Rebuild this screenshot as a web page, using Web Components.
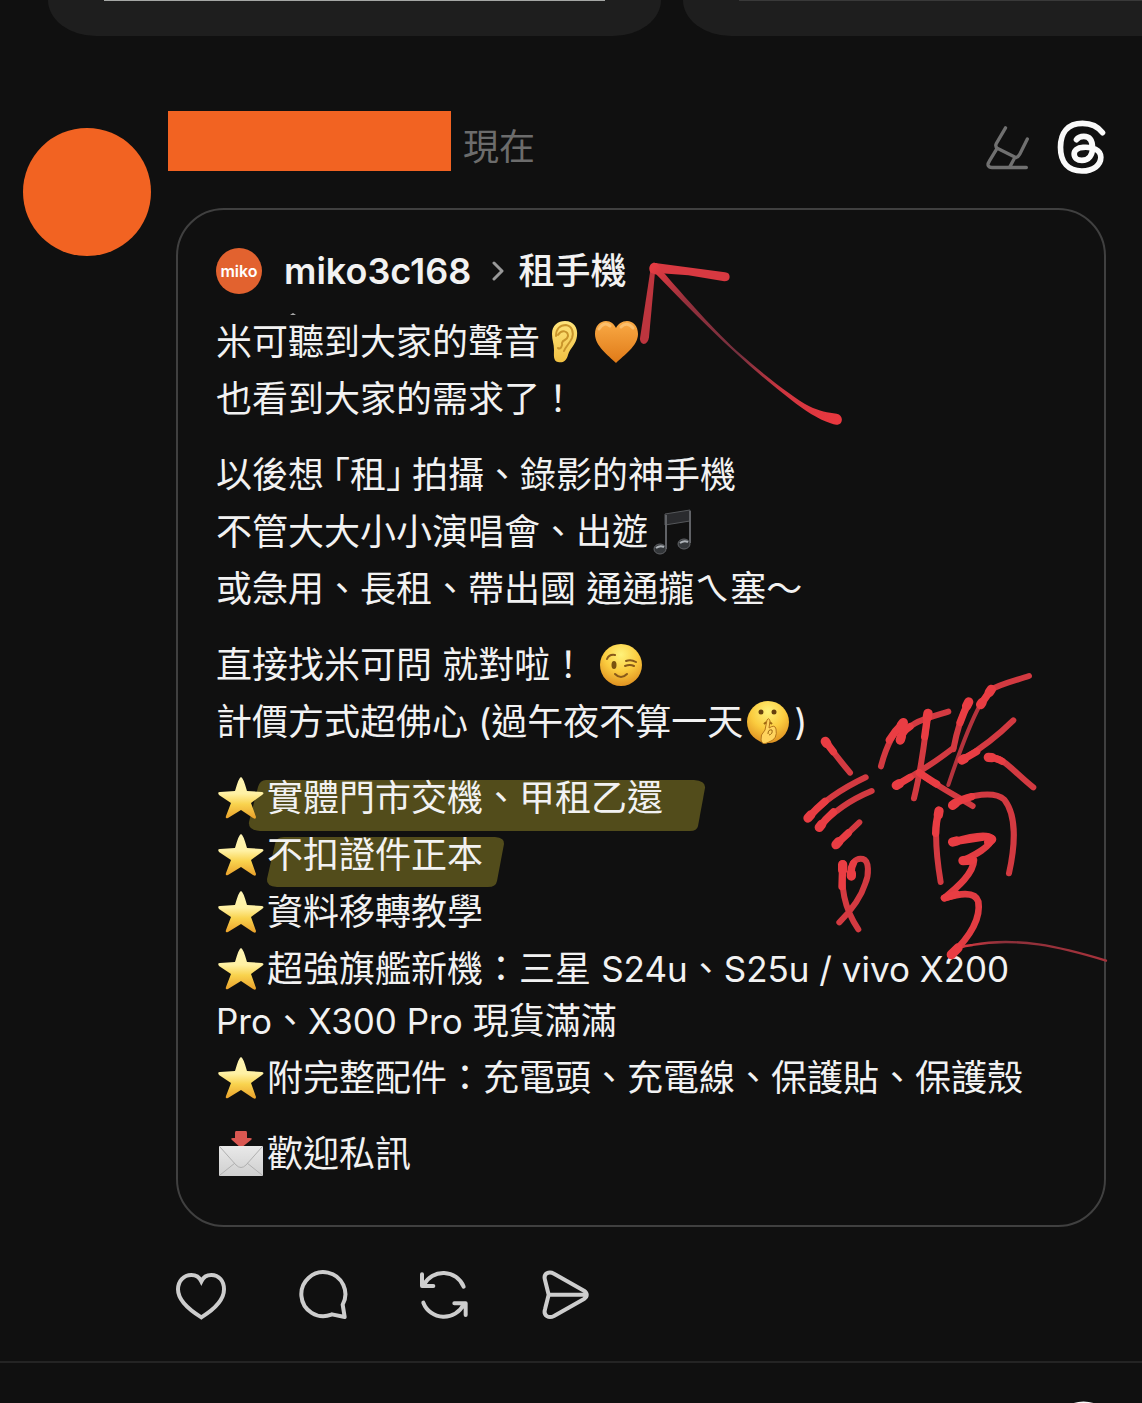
<!DOCTYPE html>
<html lang="zh-Hant">
<head>
<meta charset="utf-8">
<meta name="viewport" content="width=device-width, initial-scale=1">
<title>miko3c168</title>
<style>
html {
    background-color: #101010;
}

body {
    margin: 0;
    height: 100vh;
    overflow: hidden;
    color: #f2f2f2;
    font-family: Inter, "Noto Sans CJK TC", sans-serif;
    font-size: 36px;
    line-height: 52px;
}

p {
    margin: 0;
    display: flex;
    flex-direction: column;
    gap: 5px;
}

.open,
.close {
    font-feature-settings: "halt";
}

.open {
    padding-left: 8px;
}

.close {
    padding-right: 8px;
}

.latin {
    font-size: 35px;
    line-height: 36px;
}
</style>
</head>
<body>
<story-strip></story-strip>
<main>
    <thread-post>
        <span slot="time">現在</span>
        <quoted-post>
            <span slot="logo">miko</span>
            <span slot="name">miko3c168</span>
            <span slot="topic">租手機</span>
            <p>
                <span>米可聽到大家的聲音<emoji-glyph name="ear"></emoji-glyph><emoji-glyph name="heart"></emoji-glyph></span>
                <span>也看到大家的需求了！</span>
            </p>
            <p>
                <span>以後想<span class="open">「</span>租<span class="close">」</span>拍攝、錄影的神手機</span>
                <span>不管大大小小演唱會、出遊<emoji-glyph name="music"></emoji-glyph></span>
                <span>或急用、長租、帶出國 通通攏ㄟ塞～</span>
            </p>
            <p>
                <span>直接找米可問 就對啦！ <emoji-glyph name="wink"></emoji-glyph></span>
                <span>計價方式超佛心 (過午夜不算一天<emoji-glyph name="hush"></emoji-glyph>)</span>
            </p>
            <p>
                <span><emoji-glyph name="star"></emoji-glyph>實體門市交機、甲租乙還</span>
                <span><emoji-glyph name="star"></emoji-glyph>不扣證件正本</span>
                <span><emoji-glyph name="star"></emoji-glyph>資料移轉教學</span>
                <span>
                    <span><emoji-glyph name="star"></emoji-glyph>超強旗艦新機：三星 </span><span class="latin">S24u</span><span>、</span><span class="latin">S25u / vivo X200</span>
                    <br>
                    <span class="latin">Pro</span><span>、</span><span class="latin">X300 Pro</span> <span>現貨滿滿</span>
                </span>
                <span><emoji-glyph name="star"></emoji-glyph>附完整配件：充電頭、充電線、保護貼、保護殼</span>
            </p>
            <p>
                <span><emoji-glyph name="mail"></emoji-glyph>歡迎私訊</span>
            </p>
        </quoted-post>
    </thread-post>
    <next-post></next-post>
</main>

<script>
function define(name, html) {
    const template = document.createElement('template');
    template.innerHTML = html;
    customElements.define(name, class extends HTMLElement {
        constructor() {
            super();
            this.attachShadow({ mode: 'open' }).appendChild(template.content.cloneNode(true));
        }
    });
}

// ---- icons ----
const icons = {
    threads: { box: '290 58 146 162', width: 17, path: '<path d="M426 96C412 77 392 68 366 68C322 68 300 96 300 140C300 186 324 211 364 211C400 211 421 192 421 170C421 147 396 138 368 140C350 141 341 149 341 160C341 172 351 179 364 179C386 179 396 162 396 142C396 119 387 107 370 107C360 107 352 111 348 117"/>' },
    draft: { box: '78 72 130 135', width: 10, path: '<path d="M137 80L109 128Q105 136 112 142L168 170Q176 168 180 160L203 114M111 143L88 181C80 193 85 200 96 200H200M164 172L150 198"/>' },
    heart: { box: '45 60 150 150', width: 12, path: '<path stroke-linejoin="miter" d="M121 94C115 81 105 75 91 75C68 75 51 93 51 118C51 149 80 177 121 202C162 177 189 149 189 118C189 93 174 75 151 75C137 75 127 81 121 94Z"/>' },
    comment: { box: '414 60 150 150', width: 12, path: '<path d="M516 193L554 201L548 164A66 66 0 1 0 514 194Z"/>' },
    repost: { box: '783 60 150 150', width: 12, path: '<path d="M914 110A66 66 0 0 0 794 105M789 73V108H823M793 158A66 66 0 0 0 914 163M920 195V160H886"/>' },
    send: { box: '1149 60 150 150', width: 12, path: '<path d="M1169 134H1280M1158 90C1152 70 1170 63 1185 71L1275 122C1286 129 1286 140 1275 147L1185 198C1170 206 1152 198 1158 178L1169 134Z"/>' }
};

class LineIcon extends HTMLElement {
    constructor() {
        super();
        this.attachShadow({ mode: 'open' });
    }

    connectedCallback() {
        const icon = icons[this.getAttribute('name')];
        this.shadowRoot.innerHTML = `
<style>
:host { display: block; }
svg { display: block; width: 100%; height: 100%; }
</style>
<svg viewBox="${icon.box}" fill="none" stroke="currentColor" stroke-width="${icon.width}" stroke-linecap="round" stroke-linejoin="round" aria-hidden="true">${icon.path}</svg>`;
    }
}
customElements.define('line-icon', LineIcon);

// ---- emoji, drawn on a 51x52 box ----
const face = '<circle cx="25" cy="26" r="21" fill="url(#face)"/>';
const emoji = {
    ear: '<path d="M12 18C12 9 18 5 25 5C34 5 38 12 37 20C36 29 30 32 28 39C26 46 22 47 18 46C13 45 14 39 14 34C14 28 12 24 12 18Z" fill="url(#gold)"/><path d="M16 20C16 13 20 9 26 9C32 10 34 16 32 22C30 27 26 30 24 35M18 19C22 13 28 15 28 20C27 25 23 23 22 27C23 30 20 34 18 32" fill="none" stroke="#c9952c" stroke-width="2" stroke-linecap="round"/>',
    heart: '<path d="M25 47C17 39 4 30 4 18C4 10 9 5 15 5C20 5 23 8 25 12C27 8 31 5 36 5C42 5 47 10 47 18C47 30 33 39 25 47Z" fill="url(#orange)"/><path d="M8 13Q13 5 19 10M30 11Q36 5 42 12" stroke="#ffd08a" stroke-width="3" fill="none" stroke-linecap="round" opacity=".6"/>',
    music: '<path d="M17 8L42 4V15L17 19Z" fill="#2a2b2e" stroke="#55575a"/><path d="M18 9V43M42 5V37" stroke="#606266" stroke-width="2"/><ellipse cx="12" cy="43" rx="6" ry="5" fill="#34373a" stroke="#606266"/><ellipse cx="36" cy="38" rx="6" ry="5" fill="#34373a" stroke="#606266"/><path d="M8 42Q12 39 16 41M32 37Q36 34 40 36" stroke="#aeb3b8" stroke-width="2" fill="none"/>',
    wink: face + '<ellipse cx="18" cy="26" rx="2.5" ry="4" fill="#7a520f"/><path d="M11 20Q13 15 19 16M30 22Q35 20 40 23M29 27Q34 25 38 27M19 35Q25 41 31 35" fill="none" stroke="#87591a" stroke-width="2" stroke-linecap="round"/>',
    hush: face + '<circle cx="18" cy="16" r="2.5" fill="#65400d"/><circle cx="31" cy="16" r="2.5" fill="#65400d"/><path d="M21 28Q25 24 29 28" stroke="#9c6611" stroke-width="2" fill="none"/><path d="M24 24Q26 21 27 25L26 32Q32 28 33 33Q35 43 26 46Q19 50 18 44Q17 39 22 34Z" fill="#ffd45e" stroke="#b5751a"/><path d="M25 38Q25 33 29 34Q30 38 26 39" fill="none" stroke="#9c6611" stroke-width="1"/>',
    star: '<path d="M25 5Q27 5 31 19L46 20Q49 21 46 23L35 31L40 45Q40 48 37 46L25 38L12 46Q9 47 10 44L15 31L3 23Q1 20 4 20L19 19Q23 5 25 5Z" fill="url(#star)"/>',
    mail: '<path d="M20 3H30Q31 3 31 5V10H34Q37 10 35 12L25 20L16 12Q14 10 17 10H19V5Q19 3 20 3Z" fill="#d95751"/><rect x="3" y="18" width="44" height="30" rx="1" fill="url(#paper)"/><path d="M4 19L20 37Q25 42 30 37L46 19M4 47L19 35M46 47L31 35" fill="none" stroke="#b0b0b0" stroke-width="1"/>'
};

class EmojiGlyph extends HTMLElement {
    constructor() {
        super();
        this.attachShadow({ mode: 'open' });
    }

    connectedCallback() {
        this.shadowRoot.innerHTML = `
<style>
:host { display: inline-block; width: 51px; height: 52px; vertical-align: top; }
svg { display: block; }
</style>
<svg width="51" height="52" viewBox="0 0 51 52" aria-hidden="true">
    <defs>
        <radialGradient id="face" cx=".5" cy=".25" r=".8"><stop offset="0" stop-color="#fff27a"/><stop offset=".5" stop-color="#fbcc3f"/><stop offset="1" stop-color="#dc8a1d"/></radialGradient>
        <linearGradient id="gold" x2="0" y2="1"><stop stop-color="#ffe57c"/><stop offset="1" stop-color="#f0c042"/></linearGradient>
        <linearGradient id="orange" x2="0" y2="1"><stop stop-color="#f9aa45"/><stop offset="1" stop-color="#e07a18"/></linearGradient>
        <linearGradient id="star" x2="0" y2="1"><stop stop-color="#fff5b4"/><stop offset=".4" stop-color="#fff1a4"/><stop offset=".65" stop-color="#f9d34e"/><stop offset="1" stop-color="#e9a02a"/></linearGradient>
        <linearGradient id="paper" x2="0" y2="1"><stop stop-color="#e9e9e9"/><stop offset="1" stop-color="#cfcfcf"/></linearGradient>
    </defs>
    ${emoji[this.getAttribute('name')]}
</svg>`;
    }
}
customElements.define('emoji-glyph', EmojiGlyph);

// ---- lower edge of the carousel above the post ----
define('story-strip', `
<style>
:host { display: flex; gap: 22px; padding-left: 48px; overflow: hidden; }
.card { flex: 0 0 613px; box-sizing: border-box; height: 36px; padding: 0 56px; background: #1e1e1e; border-radius: 0 0 48px 48px / 0 0 36px 36px; }
.edge { height: 1px; background: #a5a7a5; }
.dim { background: #393939; }
</style>
<div class="card"><div class="edge"></div></div>
<div class="card"><div class="edge dim"></div></div>
`);

// ---- yellow marker, under the text ----
define('marker-layer', `
<style>
:host { position: absolute; top: 0; left: 0; }
svg { display: block; }
</style>
<svg width="926" height="1016" viewBox="178 210 926 1016" fill="#524c1b" aria-hidden="true">
    <path d="M266 780H694Q706 781 705 788L698 826Q697 831 690 831H260Q248 830 249 822L258 787Q260 780 266 780Z"/>
    <path d="M284 837H495Q505 838 504 844L497 881Q496 887 488 887H277Q266 886 267 879L275 844Q276 837 284 837Z"/>
</svg>
`);

// ---- red pen, over the text ----
define('pen-layer', `
<style>
:host { position: absolute; top: 0; left: 0; pointer-events: none; }
svg { display: block; overflow: visible; }
</style>
<svg width="926" height="1016" viewBox="178 210 926 1016" aria-hidden="true">
    <defs>
        <linearGradient id="shaft" gradientUnits="userSpaceOnUse" x1="100" y1="85" x2="650" y2="540"><stop stop-color="#e43b42"/><stop offset=".2" stop-color="#94303c"/><stop offset=".5" stop-color="#75303e"/><stop offset=".75" stop-color="#cf3640"/><stop offset="1" stop-color="#e9383f"/></linearGradient>
        <linearGradient id="tail" gradientUnits="userSpaceOnUse" x1="500" y1="880" x2="950" y2="905"><stop stop-color="#e43b42"/><stop offset=".3" stop-color="#8b303a"/><stop offset="1" stop-color="#a7323b"/></linearGradient>
    </defs>
    <path d="M290 315L293 313L296 315Z" fill="#aaa"/>
    <g transform="translate(620 240) scale(.3333)">
        <path d="M98 70L90 98L60 295Q59 309 71 312Q84 311 87 292L105 96Z" fill="#bd353e"/>
        <path d="M100 68L315 97Q329 98 329 111Q328 124 313 124L205 106L102 98Z" fill="#d83941"/>
        <path d="M92 98C84 88 88 70 102 68C112 67 121 78 125 91C190 166 288 278 362 343C438 410 525 476 568 499C598 513 624 519 650 521C665 524 669 538 663 548C657 556 645 556 632 550C595 538 552 510 514 480C370 370 240 238 110 104Z" fill="url(#shaft)"/>
    </g>
    <g transform="translate(790 660) scale(.3333)" fill="none" stroke="#d33a41" stroke-width="18" stroke-linecap="round" stroke-linejoin="round">
        <path d="M106 244Q140 290 180 338M54 474Q115 405 227 352M88 502Q150 432 245 393M138 554L208 487"/>
        <path d="M158 612C154 680 159 740 205 808M184 648C178 610 198 592 219 597C238 602 237 645 226 670C211 718 178 757 148 787"/>
        <path d="M340 188Q296 230 273 319M331 240C345 188 410 175 475 155M414 162C402 250 398 310 372 415M319 376Q424 316 490 264M386 338C450 384 500 408 548 438"/>
        <path d="M536 126Q507 180 490 268M572 134L602 90C630 72 675 62 717 48M516 300Q600 250 670 181M595 292C637 286 665 330 730 382"/>
        <path d="M570 135C530 210 500 300 475 375" stroke-width="12" stroke="#b4333d"/>
        <path d="M447 450C430 510 441 600 452 666M488 434C540 401 615 393 643 419C680 466 676 555 657 640"/>
        <path d="M488 546C530 533 590 520 605 534C604 564 537 593 519 602L552 600C550 640 505 680 463 714C500 704 555 689 565 725C574 780 535 835 484 884" stroke="#e23c42" stroke-width="20"/>
        <path d="M484 884Q500 858 548 855C680 830 810 860 948 902" stroke-width="7" stroke="url(#tail)"/>
        <g stroke="#e93d43">
            <path d="M106 244L130 275M54 474Q80 445 105 424M88 502Q108 475 130 456M138 554L175 519M340 188Q315 212 298 240M331 240Q336 214 360 200M414 160L404 230M319 376L360 352M388 338Q420 360 440 372M536 126Q520 160 510 188M604 88L572 134M516 300L560 275M595 292Q618 292 636 304M447 452Q437 490 437 520M488 434Q515 417 545 410M488 546L590 530M158 612L156 680M184 648Q181 625 190 610M463 714L500 702" stroke-width="22"/>
            <path d="M106 244L110 250M54 474L62 465M88 502L95 493M138 554L146 545M340 188L334 195M331 240L334 230M414 160L412 172M319 376L328 371M536 126L530 138M604 88L598 97M576 128L572 134M516 300L523 296M595 292L606 293M447 453L445 465M488 436L496 430M488 546L500 543M519 602L545 600M158 614L158 630M184 648L184 640M605 538L596 546M484 884L504 864" stroke-width="28"/>
        </g>
    </g>
</svg>
`);

// ---- quoted card ----
define('quoted-post', `
<style>
:host { display: block; position: relative; border: 2px solid #404040; border-radius: 48px; padding: 38px 38px 45px; }
header { display: flex; align-items: center; height: 46px; margin-bottom: 22px; font-weight: 600; }
.logo { width: 46px; height: 46px; margin-right: 22px; border-radius: 50%; background: #e2622f; color: #fff; font-size: 16px; line-height: 46px; text-align: center; }
a { color: inherit; text-decoration: none; }
svg { margin: 0 13px 0 20px; }
.topic { font-weight: 500; }
.text { position: relative; display: flex; flex-direction: column; gap: 24px; }
</style>
<marker-layer></marker-layer>
<header>
    <div class="logo"><slot name="logo"></slot></div>
    <a href="#profile"><slot name="name"></slot></a>
    <svg width="14" height="20" viewBox="0 0 14 20" fill="none" stroke="#999" stroke-width="3" stroke-linecap="round" stroke-linejoin="round" aria-hidden="true"><path d="M3 2L11 10L3 18"/></svg>
    <a class="topic" href="#topic"><slot name="topic"></slot></a>
</header>
<div class="text"><slot></slot></div>
<pen-layer></pen-layer>
`);

define('action-bar', `
<style>
:host { display: flex; gap: 72px; color: #cdcdcd; }
button { padding: 0; border: 0; background: none; color: inherit; cursor: pointer; }
line-icon { width: 50px; height: 50px; }
</style>
<button aria-label="讚"><line-icon name="heart"></line-icon></button>
<button aria-label="回覆"><line-icon name="comment"></line-icon></button>
<button aria-label="轉發"><line-icon name="repost"></line-icon></button>
<button aria-label="分享"><line-icon name="send"></line-icon></button>
`);

define('thread-post', `
<style>
:host { display: flex; gap: 17px; padding: 75px 36px 41px 23px; border-bottom: 2px solid #242424; }
.avatar { flex: none; width: 128px; height: 128px; margin-top: 17px; border-radius: 50%; background: #f26322; }
.body { flex: 1; min-width: 0; }
header { display: flex; align-items: center; height: 72px; margin-bottom: 25px; }
.name { align-self: flex-start; width: 283px; height: 60px; margin-right: 12px; background: #f26322; }
.time { flex: 1; color: #6c6c6c; }
button { padding: 0; border: 0; background: none; color: #707070; cursor: pointer; }
.draft { width: 43px; height: 45px; margin-right: 28px; }
.threads { width: 49px; height: 54px; color: #fafafa; }
.content { padding-left: 8px; }
action-bar { margin-top: 43px; }
</style>
<div class="avatar"></div>
<div class="body">
    <header>
        <div class="name"></div>
        <div class="time"><slot name="time"></slot></div>
        <button aria-label="草稿"><line-icon class="draft" name="draft"></line-icon></button>
        <line-icon class="threads" name="threads"></line-icon>
    </header>
    <div class="content">
        <slot></slot>
        <action-bar></action-bar>
    </div>
</div>
`);

// ---- top of the following post ----
define('next-post', `
<style>
:host { display: flex; justify-content: flex-end; padding: 38px 35px 0; }
line-icon { width: 49px; height: 54px; color: #fafafa; }
</style>
<line-icon name="threads"></line-icon>
`);
</script>
</body>
</html>
